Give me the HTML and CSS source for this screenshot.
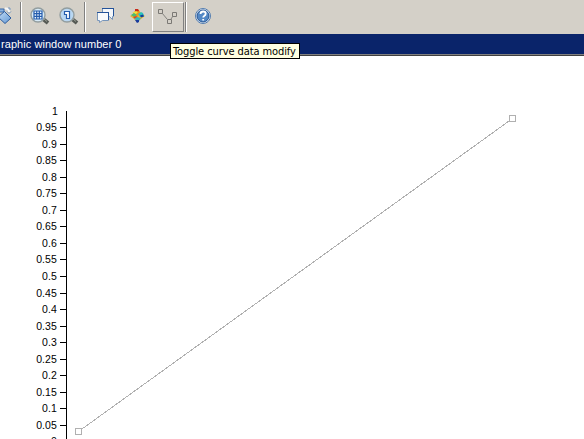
FILE: index.html
```html
<!DOCTYPE html>
<html lang="en">
<head>
<meta charset="utf-8">
<title>Graphic window number 0</title>
<link rel="stylesheet" href="styles.css">
</head>
<body>
<div class="window">
  <header class="toolbar">
    <svg class="icon rotate" width="12" height="34" viewBox="0 0 12 34">
      <path d="M0 9h4v3H0" fill="#8db5e2" stroke="#3868a8"/>
      <path d="M5 8.500q4-.5 4 3.500" fill="none" stroke="#f4f6f8" stroke-width="2"/>
      <path d="M8 8h2v2M7 11.500l2 2 2-2" fill="none" stroke="#7899bf"/>
      <path d="M-2 17L4.500 11.500L11 18L5 23.500Z" fill="url(#blue)" stroke="#2c5b9d"/>
      <defs><linearGradient id="blue" x2="1" y2="1"><stop stop-color="#c1dbf5"/><stop offset="1" stop-color="#6499d4"/></linearGradient></defs>
    </svg>
    <i class="separator first"></i>
    <svg class="icon lens" width="20" height="34" viewBox="0 0 20 34">
      <path d="M13 19l5 4" stroke="#555954" stroke-width="4"/>
      <path d="M14 19l3 2.500" stroke="#969c93" stroke-width="1"/>
      <circle cx="8" cy="15" r="7" fill="#d5e9f7" stroke="#929d9f" stroke-width="1.400"/>
      <path d="M4 11h8v8H4zM4 13.700h8M4 16.300h8M6.700 11v8M9.300 11v8" fill="#eef7ff" stroke="#245cad" stroke-width="1.200"/>
    </svg>
    <svg class="icon lens second" width="20" height="34" viewBox="0 0 20 34">
      <path d="M13 19l5 4" stroke="#555954" stroke-width="4"/>
      <path d="M14 19l3 2.500" stroke="#969c93" stroke-width="1"/>
      <circle cx="8" cy="15" r="7" fill="#b9d7f2" stroke="#929d9f" stroke-width="1.400"/>
      <path d="M5.500 11.500h5v7h-3v-4h-2z" fill="#fff" stroke="#245cad" stroke-width="1.200"/>
    </svg>
    <i class="separator mid"></i>
    <svg class="icon bubbles" width="20" height="34" viewBox="0 0 20 34">
      <path d="M6.500 8.500h11v8h-1v3l-3-3h-7z" fill="#f4f7fa" stroke="#7795ba"/>
      <path d="M6 8.500h12M17.500 9v7" stroke="#24539a"/>
      <path d="M1.500 12.500h11v8h-6l-3 2v-2h-2z" fill="#f8fafc" stroke="#7795ba"/>
      <path d="M1 12.500h12M12.500 13v7" stroke="#24539a"/>
    </svg>
    <svg class="icon surface" width="16" height="34" viewBox="0 0 16 34">
      <path d="M0 16l5-3 3-4 2 3 5 4-4 3-4 3-3-3z" fill="#e5b932"/>
      <path d="M3 13l3-3h3l1 3-2 3H4z" fill="#ee991b"/>
      <path d="M5 9h3l1 2-4 1z" fill="#c8281c"/>
      <path d="M2 13l4-2 2 1-2 2z" fill="#f0e43b"/>
      <path d="M1 15l3-2 3 2-3 2z" fill="#49bc76"/>
      <path d="M8 14l3-2 2 1 1 3-4 1z" fill="#2ac2bc"/>
      <path d="M10 15.500l3-1 1 2-3 1z" fill="#163d9c"/>
      <path d="M3 17l3-1 2 1-3 2z" fill="#e0421d"/>
      <path d="M4 19l3-2 4 1-2 3z" fill="#37b7bd"/>
      <path d="M5 20h4v2l-2 1z" fill="#173a9f"/>
    </svg>
    <div class="toggle">
      <svg width="30" height="28" viewBox="0 0 30 28">
        <path d="M9 10l5 6M18 16l2-3" stroke="#85837f"/>
        <path d="M5.500 6.500h4v4h-4zM14.500 16.500h4v4h-4zM19.500 9.500h4v4h-4z" fill="#d4d0c8" stroke="#7b7975"/>
      </svg>
    </div>
    <i class="separator last"></i>
    <svg class="icon help" width="18" height="34" viewBox="0 0 18 34">
      <circle cx="9" cy="16" r="7.500" fill="#e9f0f8" stroke="#527caf"/>
      <circle cx="9" cy="16" r="6" fill="#5388c5" stroke="#255493"/>
      <path d="M6.500 14q0-2.500 2.700-2.500 2.500 0 2.500 2.200 0 1.400-1.500 2.200-1 .6-1 1.600M9.200 19v1.500" fill="none" stroke="#fff" stroke-width="1.800"/>
    </svg>
  </header>
  <div class="titlebar"><span>raphic window number 0</span></div>
  <main>
    <svg class="plot" width="584" height="383" viewBox="0 56 584 383">
      <path class="axis" d="M66.500 111V439"/>
      <path class="axis" d="M60 127.500h6M60 144.500h6M60 160.500h6M60 177.500h6M60 193.500h6M60 210.500h6M60 226.500h6M60 243.500h6M60 259.500h6M60 276.500h6M60 293.500h6M60 309.500h6M60 326.500h6M60 342.500h6M60 359.500h6M60 375.500h6M60 392.500h6M60 408.500h6M60 425.500h6"/>
      <g class="labels">
        <text x="58" y="115">1</text><text x="57" y="131">0.95</text><text x="57" y="148">0.9</text><text x="57" y="164">0.85</text><text x="57" y="181">0.8</text><text x="57" y="197">0.75</text><text x="57" y="214">0.7</text><text x="57" y="230">0.65</text><text x="57" y="247">0.6</text><text x="57" y="263">0.55</text><text x="57" y="280">0.5</text><text x="57" y="297">0.45</text><text x="57" y="313">0.4</text><text x="57" y="330">0.35</text><text x="57" y="346">0.3</text><text x="57" y="363">0.25</text><text x="57" y="379">0.2</text><text x="57" y="396">0.15</text><text x="57" y="412">0.1</text><text x="57" y="429">0.05</text><text x="57" y="445">0</text>
      </g>
      <path class="curve" d="M78.500 431.500L512.500 118.500"/>
      <path class="handle" d="M75.500 428.500h6v6h-6zM509.500 115.500h6v6h-6z"/>
    </svg>
  </main>
  <div class="tooltip"><span>Toggle curve data modify</span></div>
</div>
</body>
</html>
```
FILE: styles.css
```css
* { box-sizing: border-box; }
body { margin: 0; background: #fff; }
.window { position: relative; width: 584px; height: 439px; overflow: hidden; }
.toolbar { height: 34px; display: flex; background: #d4d0c8; }
.toolbar svg { display: block; flex: none; }
.separator { flex: none; width: 2px; height: 30px; margin-top: 2px; background: linear-gradient(90deg, #808080 50%, #fff 50%); }
.first { margin-left: 8px; }
.lens { margin-left: 8px; }
.second { margin-left: 9px; }
.mid { margin-left: 5px; }
.bubbles { margin-left: 10px; }
.surface { margin-left: 14px; }
.toggle { flex: none; width: 32px; height: 30px; margin: 2px 0 0 6px; border: 1px solid; border-color: #fff #808080 #808080 #fff; }
.last { margin-left: 1px; }
.help { margin-left: 7px; }
.titlebar { height: 22px; padding-left: 1px; background: #0a246a; border-bottom: 1px solid #404040; box-shadow: inset 0 -1px #808080; color: #fff; font: 11px/20px "Liberation Sans", Arial, sans-serif; white-space: nowrap; }
.titlebar span { letter-spacing: 0.060px; }
.plot { display: block; }
.axis { fill: none; stroke: #000; shape-rendering: crispEdges; }
.labels { font: 10.500px "Liberation Sans", Arial, sans-serif; letter-spacing: 0.100px; fill: #000; text-anchor: end; }
.curve { stroke: #b0b0b0; shape-rendering: crispEdges; }
.handle { fill: #fff; stroke: #b0b0b0; shape-rendering: crispEdges; }
.tooltip { position: absolute; left: 170px; top: 43px; width: 130px; height: 16px; padding-left: 2px; border: 1px solid #000; background: #ffffe1; color: #000; font: 11px/15px "DejaVu Sans Condensed", "DejaVu Sans", sans-serif; white-space: nowrap; }
.tooltip span { letter-spacing: -0.090px; }
```
